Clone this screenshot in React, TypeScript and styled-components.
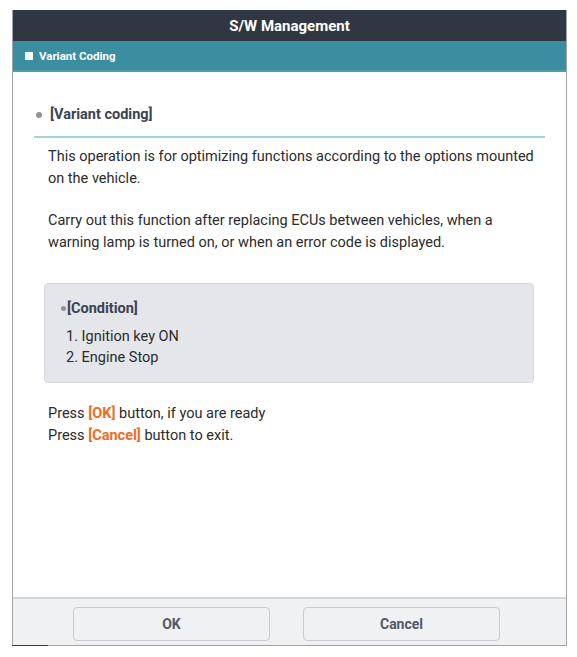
import React from 'react'
import styled, { createGlobalStyle } from 'styled-components'

const GlobalStyle = createGlobalStyle`
    html, body {
        margin: 0;
        background: #ffffff;
        font-family: Roboto, 'Liberation Sans', Arial, sans-serif;
    }
`

const Page = styled('div')`
    padding: 10px 0 0 12px;
`

const Dialog = styled('div')`
    box-sizing: border-box;
    border: solid 1px #a0a2a6;
    border-top: none;
    display: flex;
    flex-direction: column;
    height: 636px;
    position: relative;
    width: 555px;
`

const TitleBar = styled('div')`
    align-items: center;
    background: #313742;
    color: #ffffff;
    display: flex;
    font-size: 15px;
    font-weight: 700;
    height: 31px;
    justify-content: center;
`

const SectionBar = styled('div')`
    align-items: center;
    background: #3a8e9f;
    border-bottom: solid 2px #4d9fb0;
    box-sizing: border-box;
    color: #ffffff;
    display: flex;
    font-size: 11.5px;
    font-weight: 700;
    gap: 6px;
    height: 31px;
    padding-left: 12px;
`

const WhiteSquare = styled('span')`
    background: #ffffff;
    display: inline-block;
    height: 8px;
    width: 8px;
`

const Content = styled('div')`
    color: #2b2b2b;
    flex: 1 1 0%;
    font-size: 14.5px;
    padding: 34px 21px 0 21px;
`

const Heading = styled('div')`
    align-items: center;
    border-bottom: solid 2px #a8d2db;
    color: #3b4352;
    display: flex;
    font-size: 14.5px;
    font-weight: 700;
    gap: 8px;
    padding: 0 0 13px 2px;
`

const Dot = styled('span')<{ size: number }>`
    background: #8f949c;
    border-radius: 50%;
    display: inline-block;
    height: ${({ size }): string => `${size}px`};
    width: ${({ size }): string => `${size}px`};
`

const Paragraph = styled('p')`
    line-height: 22px;
    margin: 0;
    padding: 0 4px 0 14px;
`

const Body = styled('div')`
    display: flex;
    flex-direction: column;
    gap: 20px;
    padding-top: 8px;
`

const ConditionBox = styled('div')`
    background: #e5e6ea;
    border: solid 1px #d6d8dc;
    border-radius: 4px;
    margin: 29px 11px 0 10px;
    padding: 16px 16px 14px 16px;
`

const ConditionTitle = styled('div')`
    align-items: center;
    color: #3b4352;
    display: flex;
    font-weight: 700;
    gap: 1px;
    margin-bottom: 9px;
`

const ConditionList = styled('ol')`
    line-height: 21px;
    margin: 0;
    padding-left: 5px;
    list-style: none;
`

const Press = styled('p')`
    line-height: 22px;
    margin: 20px 0 0 0;
    padding: 0 14px;
`

const Key = styled('span')`
    color: #f26b1d;
    font-weight: 700;
`

const Footer = styled('div')`
    background: #f0f1f3;
    border-top: solid 2px #d5d6d9;
    box-sizing: border-box;
    display: flex;
    gap: 33px;
    height: 48px;
    padding: 8px 0 0 60px;
`

const Button = styled('button')`
    background: #f0f1f3;
    border: solid 1px #c9cbcf;
    border-radius: 4px;
    color: #505866;
    font-family: Roboto, 'Liberation Sans', Arial, sans-serif;
    font-size: 14px;
    font-weight: 700;
    height: 34px;
    width: 197px;
`

const CornerMark = styled('div')`
    background: #2c2f8a;
    bottom: -3px;
    height: 3px;
    left: -1px;
    position: absolute;
    width: 36px;
`

const conditions = ['1. Ignition key ON', '2. Engine Stop']

export default function App(): React.ReactElement {
    return (
        <Page>
            <GlobalStyle />
            <Dialog>
                <TitleBar>S/W Management</TitleBar>
                <SectionBar>
                    <WhiteSquare />
                    Variant Coding
                </SectionBar>
                <Content>
                    <Heading>
                        <Dot size={6} />
                        [Variant coding]
                    </Heading>
                    <Body>
                        <Paragraph>
                            This operation is for optimizing functions according to the options mounted on the vehicle.
                        </Paragraph>
                        <Paragraph>
                            Carry out this function after replacing ECUs between vehicles, when a warning lamp is turned on, or when an error code is displayed.
                        </Paragraph>
                    </Body>
                    <ConditionBox>
                        <ConditionTitle>
                            <Dot size={5} />
                            [Condition]
                        </ConditionTitle>
                        <ConditionList>
                            {conditions.map((c) => (
                                <li key={c}>{c}</li>
                            ))}
                        </ConditionList>
                    </ConditionBox>
                    <Press>
                        Press <Key>[OK]</Key> button, if you are ready
                        <br />
                        Press <Key>[Cancel]</Key> button to exit.
                    </Press>
                </Content>
                <Footer>
                    <Button>OK</Button>
                    <Button>Cancel</Button>
                </Footer>
                <CornerMark />
            </Dialog>
        </Page>
    )
}
